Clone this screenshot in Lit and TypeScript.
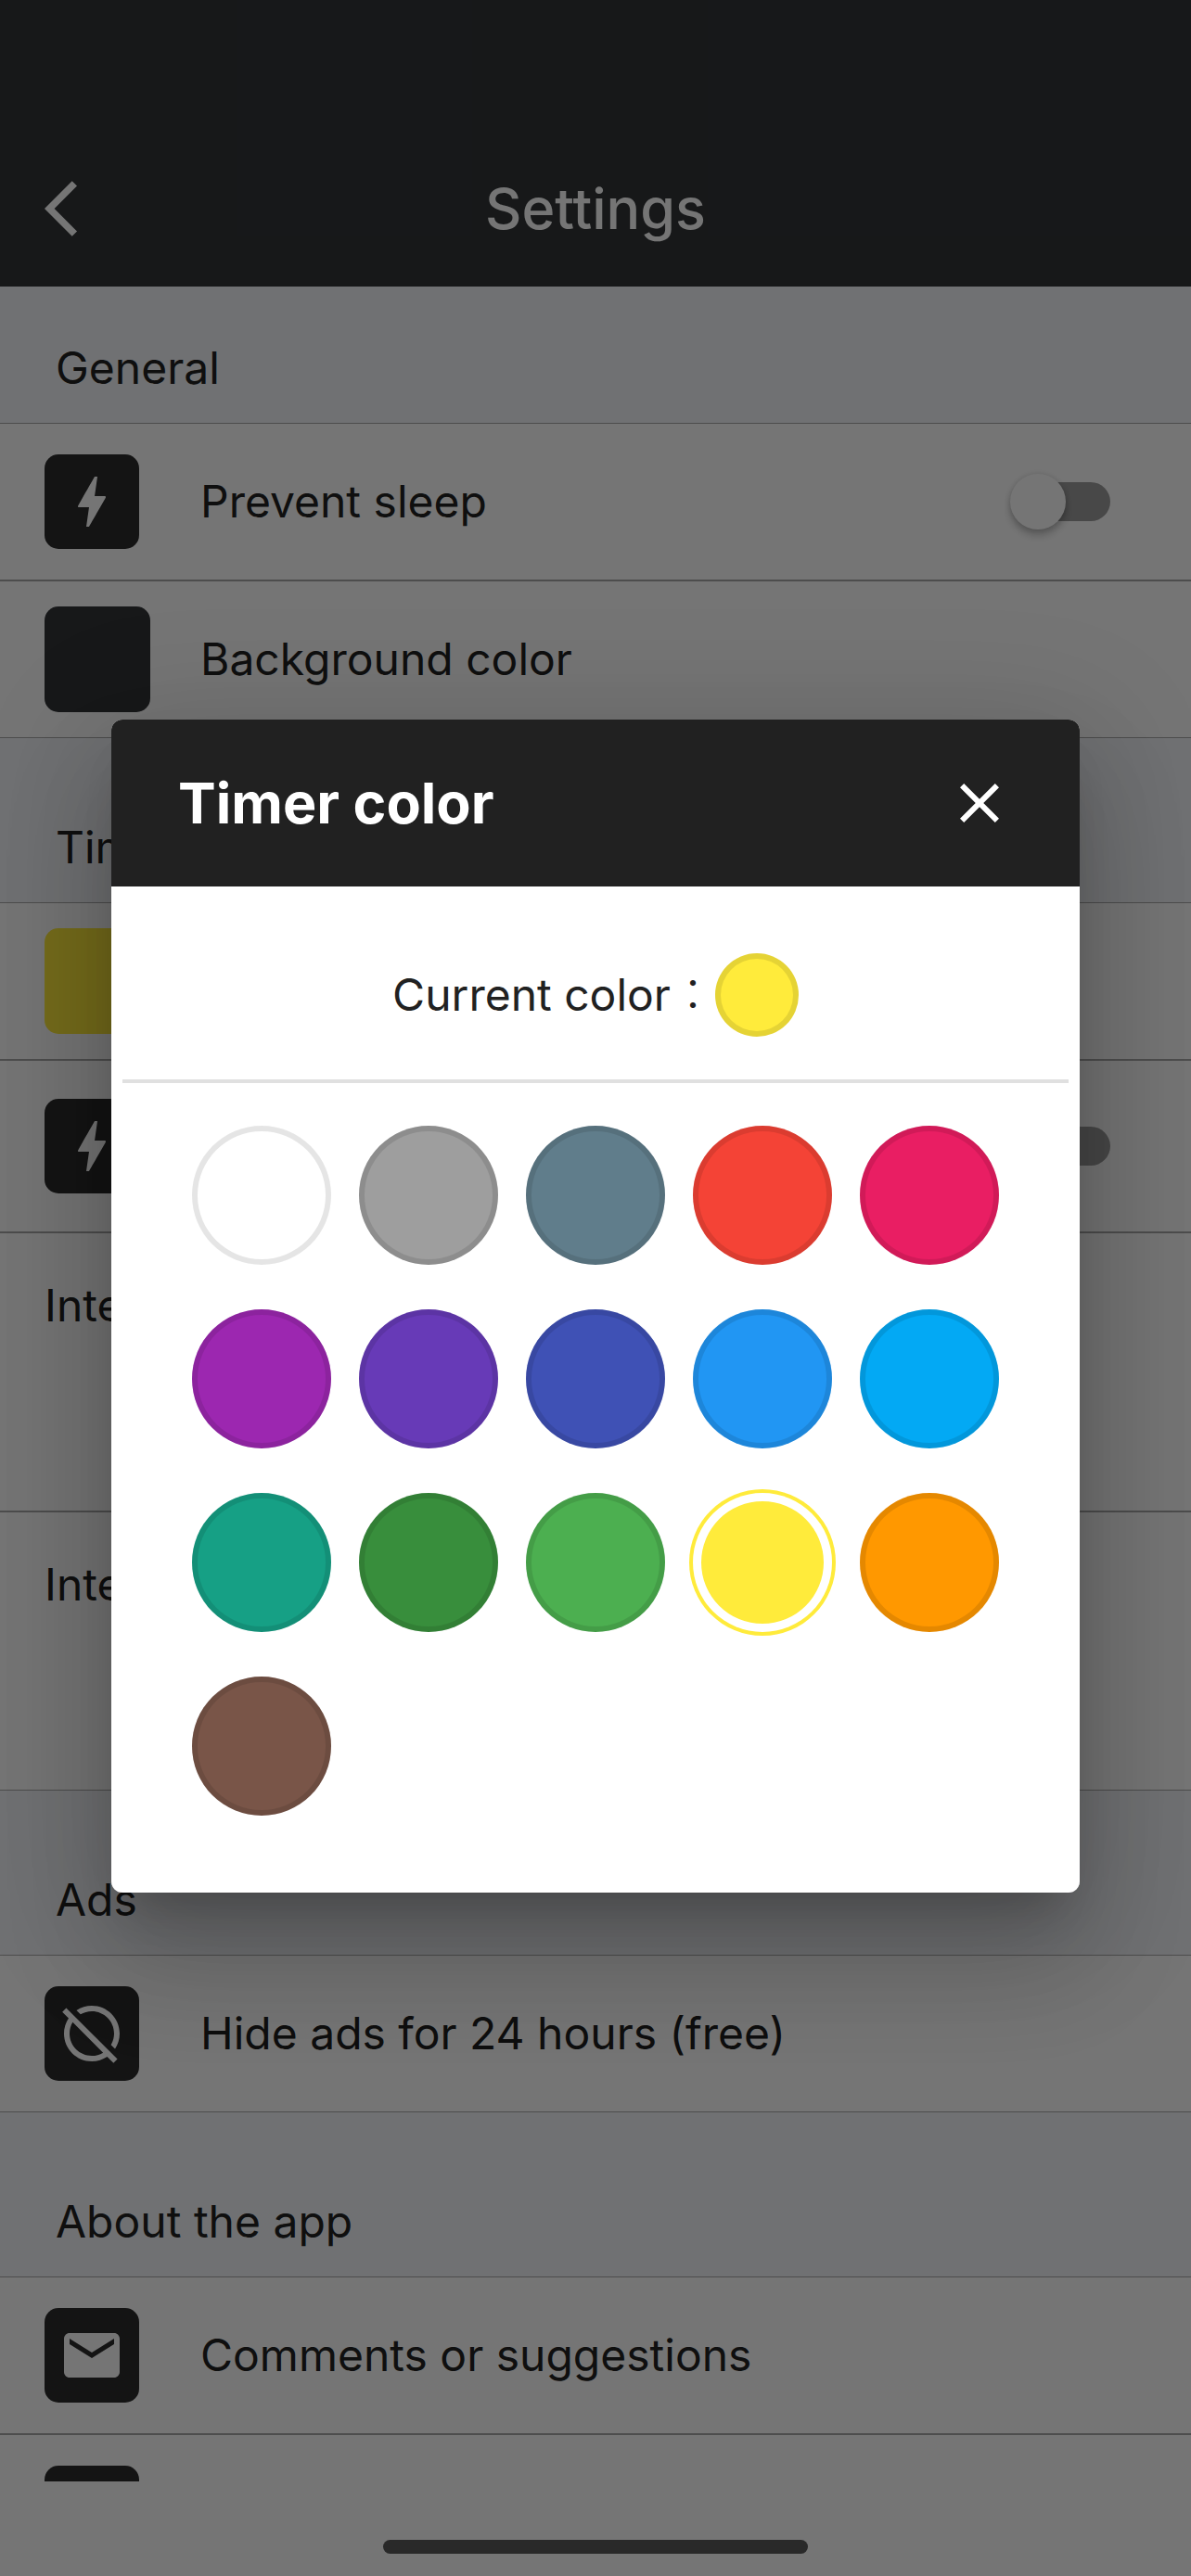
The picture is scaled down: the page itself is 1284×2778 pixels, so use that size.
import { LitElement, html, css, svg } from "lit";
import { customElement, property, state } from "lit/decorators.js";
import { styleMap } from "lit/directives/style-map.js";

const ICONS = {
  back: svg`<path d="M11.67 3.87 9.9 2.1 0 12l9.9 9.9 1.77-1.77L3.54 12z"/>`,
  bolt: svg`<path d="M11 21h-1l1-7H7.5c-.88 0-.33-.75-.31-.78C8.48 10.94 10.42 7.54 13.01 3h1l-1 7h3.51c.4 0 .62.19.4.66C12.97 17.55 11 21 11 21z"/>`,
  mail: svg`<path d="M20 4H4c-1.1 0-1.99.9-1.99 2L2 18c0 1.1.9 2 2 2h16c1.1 0 2-.9 2-2V6c0-1.1-.9-2-2-2zm0 4-8 5-8-5V6l8 5 8-5v2z"/>`,
  off: svg`<path d="M2.81 2.81 1.39 4.22l2.27 2.27A9.9 9.9 0 0 0 2 12c0 5.52 4.48 10 10 10 2.04 0 3.93-.61 5.51-1.66l2.27 2.27 1.41-1.41L2.81 2.81zM12 20c-4.41 0-8-3.59-8-8 0-1.48.41-2.86 1.12-4.06l10.94 10.94A7.9 7.9 0 0 1 12 20zM7.94 5.12 6.49 3.66A9.9 9.9 0 0 1 12 2c5.52 0 10 4.48 10 10 0 2.04-.61 3.93-1.66 5.51l-1.46-1.46A7.9 7.9 0 0 0 20 12c0-4.41-3.59-8-8-8-1.48 0-2.86.41-4.06 1.12z"/>`,
  close: svg`<path d="M19 6.41 17.59 5 12 10.59 6.41 5 5 6.41 10.59 12 5 17.59 6.41 19 12 13.41 17.59 19 19 17.59 13.41 12z"/>`,
};
type IconName = keyof typeof ICONS;

const icon = (name: IconName) =>
  html`<svg class="icon" viewBox="0 0 24 24" aria-hidden="true">${ICONS[name]}</svg>`;

const COLORS = [
  ["White", "#ffffff"],
  ["Grey", "#9e9e9e"],
  ["Blue grey", "#607d8b"],
  ["Red", "#f44336"],
  ["Pink", "#e91e63"],
  ["Purple", "#9c27b0"],
  ["Deep purple", "#673ab7"],
  ["Indigo", "#3f51b5"],
  ["Blue", "#2196f3"],
  ["Light blue", "#03a9f4"],
  ["Teal", "#16a085"],
  ["Dark green", "#388e3c"],
  ["Green", "#4caf50"],
  ["Yellow", "#ffeb3b"],
  ["Orange", "#ff9800"],
  ["Brown", "#795548"],
];

const shared = css`
  * {
    box-sizing: border-box;
  }
  .icon {
    display: block;
    width: 72px;
    height: 72px;
    fill: currentColor;
  }
  button {
    margin: 0;
    padding: 0;
    border: 0;
    background: none;
    color: inherit;
    font: inherit;
    text-align: left;
    cursor: pointer;
  }
`;

@customElement("settings-row")
class SettingsRow extends LitElement {
  @property() label = "";
  @property() icon?: IconName;
  @property() swatch?: string;
  @property({ type: Boolean }) toggle = false;

  static styles = [
    shared,
    css`
      :host {
        display: block;
        background: #fff;
      }
      .row {
        display: flex;
        align-items: center;
        width: 100%;
        min-height: 168px;
        padding: 0 87px 0 48px;
        color: #212121;
        line-height: 60px;
      }
      .lead {
        flex: none;
        width: 168px;
      }
      .badge {
        display: grid;
        place-items: center;
        width: 102px;
        height: 102px;
        border-radius: 15px;
        background: #2d2d2d;
        color: #fff;
      }
      .swatch {
        display: block;
        width: 114px;
        height: 114px;
        border-radius: 15px;
      }
      .label {
        flex: 1;
      }
      .switch {
        appearance: none;
        flex: none;
        display: flex;
        align-items: center;
        width: 99px;
        height: 42px;
        margin: 0;
        border-radius: 21px;
        background: #9e9e9e;
      }
      .switch::before {
        content: "";
        flex: none;
        width: 60px;
        height: 60px;
        margin-left: -9px;
        border-radius: 50%;
        background: #fff;
        box-shadow: 0 6px 9px rgba(0, 0, 0, 0.24), 0 0 6px rgba(0, 0, 0, 0.12);
      }
      .switch:checked {
        justify-content: flex-end;
      }
    `,
  ];

  render() {
    const lead = html`<span class="lead">
      ${this.icon
        ? html`<span class="badge">${icon(this.icon)}</span>`
        : html`<span class="swatch" style=${styleMap({ background: this.swatch ?? "" })}></span>`}
    </span>`;
    return this.toggle
      ? html`<label class="row">
          ${lead}<span class="label">${this.label}</span>
          <input class="switch" type="checkbox" role="switch" />
        </label>`
      : html`<button class="row" type="button">
          ${lead}<span class="label">${this.label}</span>
        </button>`;
  }
}

@customElement("color-dialog")
class ColorDialog extends LitElement {
  @property() color = "";

  static styles = [
    shared,
    css`
      :host {
        display: block;
        width: 100%;
        max-width: 1044px;
      }
      .dialog {
        overflow: hidden;
        border-radius: 12px;
        background: #fff;
        color: #212121;
      }
      .frame {
        border-radius: 12px;
        box-shadow: 0 33px 45px -21px rgba(0, 0, 0, 0.2), 0 72px 114px 9px rgba(0, 0, 0, 0.14),
          0 27px 138px 24px rgba(0, 0, 0, 0.12);
      }
      .head {
        display: flex;
        align-items: center;
        justify-content: space-between;
        height: 180px;
        padding: 0 72px;
        background: #212121;
        color: #fff;
      }
      h2 {
        margin: 0;
        font-size: 61px;
        font-weight: 700;
        line-height: 72px;
      }
      .current {
        display: flex;
        align-items: center;
        justify-content: center;
        margin: 0 12px;
        padding: 72px 0 46px;
        border-bottom: 4px solid #e0e0e0;
        line-height: 60px;
      }
      .dot {
        width: 90px;
        height: 90px;
        border-radius: 50%;
        box-shadow: inset 0 0 0 6px rgba(0, 0, 0, 0.1);
      }
      .colon {
        font-weight: 300;
      }
      .grid {
        display: grid;
        grid-template-columns: repeat(5, 150px);
        justify-content: center;
        gap: 48px 30px;
        margin: 0;
        padding: 46px 0 83px;
        border: 0;
      }
      .choice {
        appearance: none;
        width: 150px;
        height: 150px;
        margin: 0;
        border-radius: 50%;
        background: var(--swatch);
        box-shadow: inset 0 0 0 6px rgba(0, 0, 0, 0.1);
        cursor: pointer;
      }
      .choice:checked {
        box-shadow: 0 0 0 4px var(--swatch), inset 0 0 0 9px #fff;
      }
    `,
  ];

  render() {
    return html`<div class="frame">
      <section class="dialog" role="dialog" aria-modal="true" aria-labelledby="title">
        <header class="head">
          <h2 id="title">Timer color</h2>
          <button type="button" aria-label="Close">${icon("close")}</button>
        </header>
        <div class="current">
          <span>Current color<span class="colon">：</span></span>
          <span class="dot" style=${styleMap({ backgroundColor: this.color })}></span>
        </div>
        <fieldset class="grid" aria-label="Colors">
          ${COLORS.map(
            ([name, value]) => html`<input
              class="choice"
              type="radio"
              name="color"
              aria-label=${name}
              style=${styleMap({ "--swatch": value })}
              .checked=${value === this.color}
              @change=${() => this.dispatchEvent(new CustomEvent("pick", { detail: value }))}
            />`,
          )}
        </fieldset>
      </section>
    </div>`;
  }
}

@customElement("app-root")
class AppRoot extends LitElement {
  @state() private timerColor = "#ffeb3b";

  static styles = [
    shared,
    css`
      :host {
        display: block;
        font-family: Inter, "Noto Sans CJK JP", sans-serif;
        font-size: 48px;
        color: #212121;
      }
      .screen {
        position: relative;
        display: flex;
        flex-direction: column;
        height: 100vh;
        overflow: hidden;
        background: #fff;
      }
      .bar {
        flex: none;
        display: grid;
        grid-template-columns: 1fr auto 1fr;
        align-items: center;
        padding: 141px 48px 0;
        background: #323538;
        color: #fff;
      }
      h1 {
        margin: 0;
        font-size: 61px;
        font-weight: 500;
        line-height: 168px;
      }
      .list {
        flex: 1;
        min-height: 0;
        overflow: hidden;
      }
      .heading {
        display: flex;
        align-items: flex-end;
        height: 177px;
        margin: 0;
        padding: 0 60px 29px;
        background: #f3f6fa;
        font-size: 48px;
        font-weight: 400;
        line-height: 60px;
      }
      .heading.first {
        height: 147px;
      }
      .group {
        display: flex;
        flex-direction: column;
        gap: 2px;
        padding: 1px 0;
        background: #a8a8a8;
      }
      .roomy {
        padding: 8px 0;
      }
      .interval {
        height: 299px;
        padding: 48px;
        background: #fff;
        line-height: 60px;
      }
      .safe {
        flex: none;
        height: 102px;
      }
      .scrim {
        position: absolute;
        inset: 0;
        display: flex;
        align-items: center;
        justify-content: center;
        padding: 141px 120px 102px;
        background: rgba(0, 0, 0, 0.54);
      }
      .home {
        position: absolute;
        bottom: 24px;
        left: 50%;
        width: 458px;
        height: 15px;
        margin-left: -229px;
        border-radius: 8px;
        background: #292929;
      }
    `,
  ];

  private heading(text: string, first = false) {
    return html`<h2 class="heading ${first ? "first" : ""}">${text}</h2>`;
  }

  render() {
    return html`<div class="screen">
      <header class="bar">
        <button type="button" aria-label="Back">${icon("back")}</button>
        <h1>Settings</h1>
      </header>
      <main class="list">
        ${this.heading("General", true)}
        <div class="group">
          <settings-row icon="bolt" label="Prevent sleep" toggle></settings-row>
          <settings-row swatch="#323538" label="Background color"></settings-row>
        </div>
        ${this.heading("Timer")}
        <div class="group">
          <settings-row swatch=${this.timerColor} label="Color"></settings-row>
          <settings-row class="roomy" icon="bolt" label="Flash" toggle></settings-row>
          <div class="interval">Interval</div>
          <div class="interval">Interval</div>
        </div>
        ${this.heading("Ads")}
        <div class="group">
          <settings-row icon="off" label="Hide ads for 24 hours (free)"></settings-row>
        </div>
        ${this.heading("About the app")}
        <div class="group">
          <settings-row icon="mail" label="Comments or suggestions"></settings-row>
          <settings-row icon="mail"></settings-row>
        </div>
      </main>
      <div class="safe"></div>
      <div class="scrim">
        <color-dialog
          color=${this.timerColor}
          @pick=${(e: CustomEvent<string>) => (this.timerColor = e.detail)}
        ></color-dialog>
      </div>
      <div class="home"></div>
    </div>`;
  }
}
